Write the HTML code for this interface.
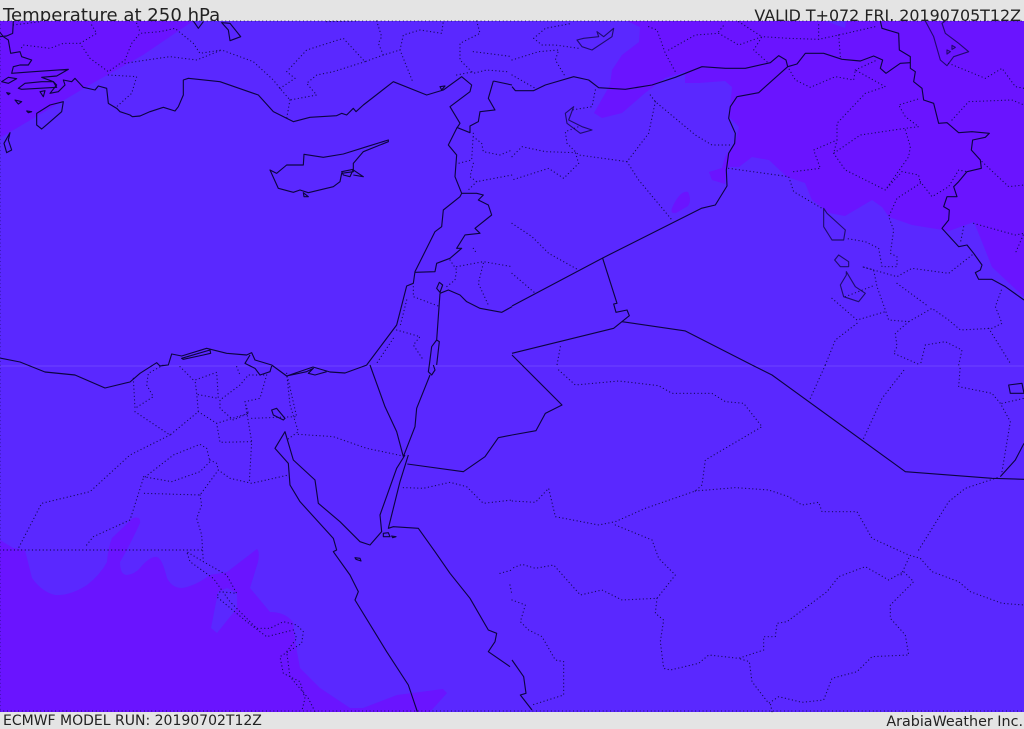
<!DOCTYPE html>
<html lang="en">
<head>
<meta charset="utf-8">
<title>Temperature at 250 hPa</title>
<style>
html,body{margin:0;padding:0;background:#e4e4e4}
body{width:1024px;height:729px;overflow:hidden}
svg{display:block}
.s path{fill:none;stroke:#0c0440;stroke-width:3.4;stroke-linejoin:round}
.d path{fill:none;stroke:#160a5c;stroke-width:3.6;stroke-linecap:round;stroke-linejoin:round;stroke-dasharray:.3 10.5}
text{font-family:"DejaVu Sans",sans-serif;fill:#222}
</style>
</head>
<body>
<svg width="1024" height="729" viewBox="0 0 1024 729" xmlns="http://www.w3.org/2000/svg">
<rect width="1024" height="729" fill="#e4e4e4"/>
<text x="3" y="21" font-size="18.1">Temperature at 250 hPa</text>
<text x="1021" y="21" font-size="15.9" text-anchor="end">VALID T+072 FRI. 20190705T12Z</text>
<text x="3" y="725" font-size="14">ECMWF MODEL RUN: 20190702T12Z</text>
<text x="1023" y="726" font-size="14.3" text-anchor="end">ArabiaWeather Inc.</text>
<rect x="0" y="21" width="1024" height="691" fill="#5a28ff"/>
<g fill="#6a14ff">
<path d="M0 21H193L143 55 93 83 0 138Z"/>
<path d="M627 21 640 27 639 42 622 55 612 70 610 85 594 113 602 118 622 113 645 93 665 78 685 72 685 83 699 83 725 81 732 87 729 117 739 127 735 143 725 157 722 168 709 172 712 180 725 184 727 167 739 167 752 157 769 160 787 177 805 183 812 200 829 213 845 216 872 200 882 207 889 217 912 225 949 231 974 222 992 267 1024 297V21Z"/>
<path d="M672 208Q680 190 688 192 692 200 688 206L676 213Q670 214 672 208Z"/>
<path d="M0 540 13 548 25 550 32 578Q42 592 55 595 70 596 87 585 100 575 107 562 108 548 112 538L133 518Q141 516 140 523 130 545 120 562 120 575 127 575 135 574 140 568 150 556 157 557 162 558 167 578 172 588 182 588 195 586 210 575L227 572 257 549Q260 552 258 562L250 588 270 612Q285 612 293 622 295 640 297 652L300 668 320 688 350 708H363L397 695 443 689 447 693 430 712H0Z"/>
</g>
<path d="M218 592 227 588 237 593 237 608 217 633 211 628Z" fill="#5a28ff"/>
<path d="M825 21 845 28 846 21Z" fill="#5a28ff"/>
<path d="M0 366H1024" stroke="#6d44ff" stroke-width="1"/>

<g class="d">
<path d="M0 21H1024M0 711H1024M0 21V711" style="stroke-width:1;stroke-dasharray:.1 3.6"/>
<g transform="scale(.33333)">
<path d="M40 75 120 65M275 75 290 100 240 130 190 130 150 145 70 135 60 150M240 130 270 175 325 215 375 180 395 130 420 100 480 95 525 85 580 130 600 160 665 150 760 185 820 240 840 265M410 70 420 95M375 190 440 180 510 170 590 180 665 150M325 225 410 230 395 280 350 320M840 265 885 235 860 215 920 150 1030 115 1095 185 1150 165 1200 150 1210 105 1260 90 1325 100 1330 63M1095 185 1000 215 950 225 920 250 950 285 870 300 840 265M870 300 860 355M1200 150 1240 250M1130 63 1145 110 1135 130 1150 165M980 65 1070 63M1430 63 1440 100 1380 130 1380 180 1420 220 1460 210 1520 215M1370 225 1420 215M1420 155 1500 165 1536 170"/>
<path d="M1420 400 1415 480 1375 490M1420 410 1445 430 1450 455 1500 465 1536 450M1420 490 1410 530 1430 545 1536 525M1430 545 1400 575M1350 780 1370 810 1365 840 1340 860M1370 800 1450 785 1536 800M1450 790 1435 850 1465 915M1240 860 1240 890 1320 920M1190 990 1260 1010 1240 1035 1270 1080M1220 900 1200 980M1180 1015 1130 1090M1420 745 1430 760"/>
</g>
<g transform="translate(512 0) scale(.33333)">
<path d="M65 115 100 85 180 70M65 115 90 135 130 135 200 145M0 180 80 155 140 150 130 180 160 230M0 225 70 265M250 270 240 320 180 330M410 80 435 90 460 160 490 215M470 150 550 105 620 100 680 135 750 110 830 115 920 118 980 105 1090 80M620 95 640 70M680 65 750 110 725 150 770 190M920 118 920 65M980 105 985 170M415 285 430 305 550 405 600 435 660 435M430 305 410 400 345 485 200 465 165 430 160 395 200 380M0 470 30 440 100 455 190 458 200 490 155 535 110 505 0 540M345 485 380 540 480 660"/>
<path d="M650 505 830 530 845 575 930 625M845 515 925 505 905 450 975 420 975 370 1060 280 1120 260 1030 210 1025 240 970 230 895 262 850 240 830 205M1030 210 1095 180M975 420 965 460 1045 405 1180 385 1220 380 1180 350 1160 315 1225 295M1180 390 1195 440 1190 470 1120 570 1000 510 965 460M1170 515 1120 570M1170 515 1220 525 1225 550 1155 595 1130 650 1145 690 1135 760 1155 770 1155 800 1110 800 1100 745 1060 725 1000 715M1225 545 1260 590 1310 560 1340 510 1365 515M1410 485 1490 560 1536 555M1320 360 1370 305 1500 300 1536 315M1310 190 1420 235 1470 205 1510 260 1536 265M1385 670 1510 705 1536 700 1510 760M1355 680 1345 730M1380 765 1310 820 1200 805 1155 830 1050 800 1085 810 1095 860 1120 930 1130 960 1190 965 1260 925 1310 960 1345 990 1440 985 1470 970 1450 920 1470 865M1155 850 1250 920M960 895 1035 960 1120 935M1000 890 1090 855M1190 965 1150 1000 1155 1040 1145 1060 1225 1095M1035 970 970 1020 940 1095M1240 1035 1300 1025 1350 1050 1340 1095M1240 1035 1225 1095M1430 985 1495 1090M0 670 60 710 110 760 200 810M0 820 70 880M145 1040 135 1095"/>
</g>
<g transform="translate(0 365) scale(.33333)">
<path d="M400 40 405 130 460 95 440 60 445 25 490 0M405 140 510 210 595 140 590 85 585 45 650 22 655 100 590 88M540 5 580 45M710 5 720 30M800 30 780 100 735 110 745 145 700 165 660 130 660 105 720 60 745 30 800 30M595 140 650 175 660 232 755 230M735 110 755 230 748 350M650 175 745 145M755 160 890 155 860 25M860 25 870 120 895 200 860 225M895 208 1000 215 1100 250 1205 272M510 210 390 270 270 380 125 415 55 550M0 555 610 555M260 540 280 515 390 465 430 340 520 270 600 238 620 250 630 290 600 320 515 350 430 335M630 285 650 295 655 315 600 390 430 385M600 390 605 420 590 460 605 510 610 590 560 560 570 590 640 640 690 710 770 790 810 790 850 770 890 780 910 800 905 835 840 875 850 925 900 950 915 1000 905 1040M610 590 680 630 710 685 660 680 650 695 740 770 800 815 880 795 890 820 860 860 870 935 925 1000 945 1040M655 315 690 340 755 355 865 330M1210 368 1270 370 1350 352 1400 365 1450 415 1536 405M1500 625 1536 615M1530 660 1536 690"/>
</g>
<g transform="translate(512 365) scale(.33333)">
<path d="M140 15 190 60 320 48 440 62 480 85 600 85 640 110 695 115 750 185 580 285 570 360 550 378 400 430 310 470 260 480 130 455 110 370 70 412 0 408M550 378 670 368 770 375 830 395 870 420 920 412 930 440 1035 440 1080 520 1190 570 1225 580 1260 620 1340 650 1375 680 1470 715 1536 720M310 480 420 525 440 580 490 630 435 700 330 705 270 675 205 690 125 600 70 610 30 598 0 610M435 700 430 745 455 765 445 830 455 910 475 915 560 895 590 870 680 880 755 855 755 815 790 815 795 775 825 770 945 680 980 635 1060 605 1130 645 1175 620 1205 650 1135 720 1135 760 1180 810 1190 870 1080 875 1035 920 960 940 935 1005 870 1012 800 995 770 1015 720 950 712 890 680 880M1190 580 1165 635M1220 555 1310 410 1360 370 1465 335M1470 320 1495 170 1465 115 1440 85 1340 65 1345 0M1470 115 1536 100M895 100 940 0M1055 220 1110 100 1180 10M0 705 40 720 25 770 50 795 90 815 130 885 155 890 155 990 60 1020M780 1040 775 1015"/>
</g>
</g>

<g class="s">
<g transform="scale(.33333)">
<path d="M40 63 38 100 20 108 0 110M0 97 10 110 25 120 32 160 60 155 65 170 95 180 85 195 60 195 40 200 35 220 100 215 205 208 170 228 125 232 160 245 170 255 150 280 175 275 195 255 190 240 215 245 225 235 250 262 285 270 295 258 320 265 325 310 350 325 360 335 390 345 397 350 420 348 450 335 490 322 525 333 535 320 550 285 550 240 565 235 660 245 775 285 820 335 880 365 930 352 1010 347 1025 340 1040 345 1060 325 1068 335 1090 315 1180 245 1280 285 1330 270 1385 230 1415 255 1410 275 1350 320 1380 370 1370 385 1345 435 1370 465 1365 530 1385 580 1380 590 1330 630 1325 680 1305 695 1245 815 1240 850 1220 858 1190 975 1100 1095"/>
<path d="M55 265 75 250 125 245 160 245 170 262 65 268ZM190 305 185 335 145 370 125 387 110 375 110 340 150 315ZM30 398 12 430 20 458 35 450 25 420ZM580 63 595 85 610 65M665 68 690 70 722 110 690 122 685 90ZM5 245 25 232 50 236 25 250ZM20 278 30 280 25 284ZM45 300 65 305 55 312ZM80 333 95 335 85 338ZM120 275 135 272 130 290ZM1320 260 1335 258 1325 270Z"/>
<path d="M1165 420 1100 440 1030 462 970 472 912 463 910 495 860 495 830 520 810 510 835 565 880 577 900 570 925 578 1000 560 1020 545 1025 520 1060 515 1060 490 1090 455 1165 425ZM1060 510 1090 530 1060 525M1025 515 1060 508 1050 530 1030 525ZM910 578 925 590 912 590Z"/>
<path d="M1480 243 1536 255M1480 243 1465 295 1485 330 1440 335 1435 365 1410 378 1410 398 1370 382M1385 580 1430 580 1450 585 1435 600 1465 615 1475 645 1425 685 1440 700 1395 705 1370 745 1385 745 1350 775 1310 790 1305 815 1245 817M1320 880 1345 870 1380 885 1400 905 1440 925 1505 937 1536 920M1320 880 1310 1020M1318 847 1328 855 1320 877 1310 865ZM1310 1020 1295 1040 1288 1095M1310 1020 1318 1025 1310 1095"/>
</g>
<g transform="translate(512 0) scale(.33333)">
<path d="M0 260 10 272 65 272 100 255 185 230 230 240 260 263 340 268 420 255 490 232 570 200 640 205 700 205 775 188 800 167 822 180 827 200 855 192 880 160 935 160 990 178 1045 183 1085 168 1112 180 1105 205 1122 220 1165 190 1195 188"/>
<path d="M827 200 740 278 675 290 655 320 650 355 670 400 668 430 650 460 643 510 645 558 610 615 568 625 270 775 0 918M272 775 315 910 305 912 312 937 345 930 352 947 305 985 0 1060M330 965 520 993 720 1095M0 1065 30 1095"/>
<path d="M1105 63 1110 85 1160 100 1162 150 1195 170 1195 205 1210 215 1205 245 1230 265 1235 300 1265 310 1280 370 1305 368 1340 398 1380 395 1432 400 1420 412 1382 420 1378 450 1405 480 1408 505 1365 515 1340 545 1325 560 1335 590 1305 590 1295 620 1312 630 1310 660 1290 685 1340 740 1365 735 1385 760 1410 795 1405 810 1390 818 1400 838 1440 838 1480 860 1536 900"/>
</g>
<g class="s" opacity=".75">
<g transform="translate(512 0) scale(.33333)">
<path d="M1240 63 1265 110 1285 180 1305 197 1325 170 1370 155 1340 130 1300 100 1290 70 1300 63M1305 150 1315 155 1305 162ZM1320 136 1330 142 1320 148ZM195 120 215 115 260 110 255 95 275 110 305 85 300 110 240 150 210 140ZM160 340 185 320 170 360 210 380 240 390 205 400 165 370ZM935 625 945 640 1000 690 995 720 960 720 935 680ZM980 765 1010 785 1010 800 985 800 968 780ZM1003 815 1003 825 985 855 995 890 1040 905 1060 880 1030 860Z"/>
</g>
</g>
<g transform="translate(140 340) scale(.33333)">
<path d="M-420 54-360 66-285 96-195 105-105 144-30 126 0 100 50 68 60 78 85 75 95 42 125 48 200 25 260 40 320 45 335 38 345 60 395 75 440 108 519 81 570 96 615 99 681 75M125 55 210 30 212 40 190 45 130 58ZM330 45 315 70 345 85 360 105 390 95 395 78M440 108 500 95 520 85 505 100 525 105 560 95"/>
</g>
<g transform="translate(0 365) scale(.33333)">
<path d="M1110 0 1155 125 1190 200 1210 275M1288 0 1285 20 1295 30 1305 15 1300 0M1290 30 1250 130 1245 185 1210 275M1225 270 1200 350 1165 490 1180 485 1255 490 1305 560 1350 625 1410 700 1465 795 1490 805 1485 830 1465 860 1530 905M1215 270 1190 310 1140 450 1145 500 1110 540 1080 530 1020 470 955 415 945 345 880 285 855 200 825 250 865 295 870 360 900 410 1000 520 1010 555 1000 560 1050 630 1075 680 1065 705 1160 860 1225 960 1252 1040M815 135 830 130 855 160 850 165 820 150ZM1222 297 1390 320 1455 275 1495 218 1536 210M1150 505 1165 503 1170 515 1150 515ZM1175 513 1188 515 1178 518ZM1065 578 1080 580 1083 588 1068 583Z"/>
</g>
<g transform="translate(512 365) scale(.33333)">
<path d="M30 0 150 120 100 145 72 197 0 210M720 0 780 30 1180 320 1440 340 1536 343M1465 335 1510 285 1536 235M1490 60 1530 55 1536 85 1495 85ZM0 885 35 935 42 985 25 990 60 1035"/>
</g>
</g>
</svg>
</body>
</html>
